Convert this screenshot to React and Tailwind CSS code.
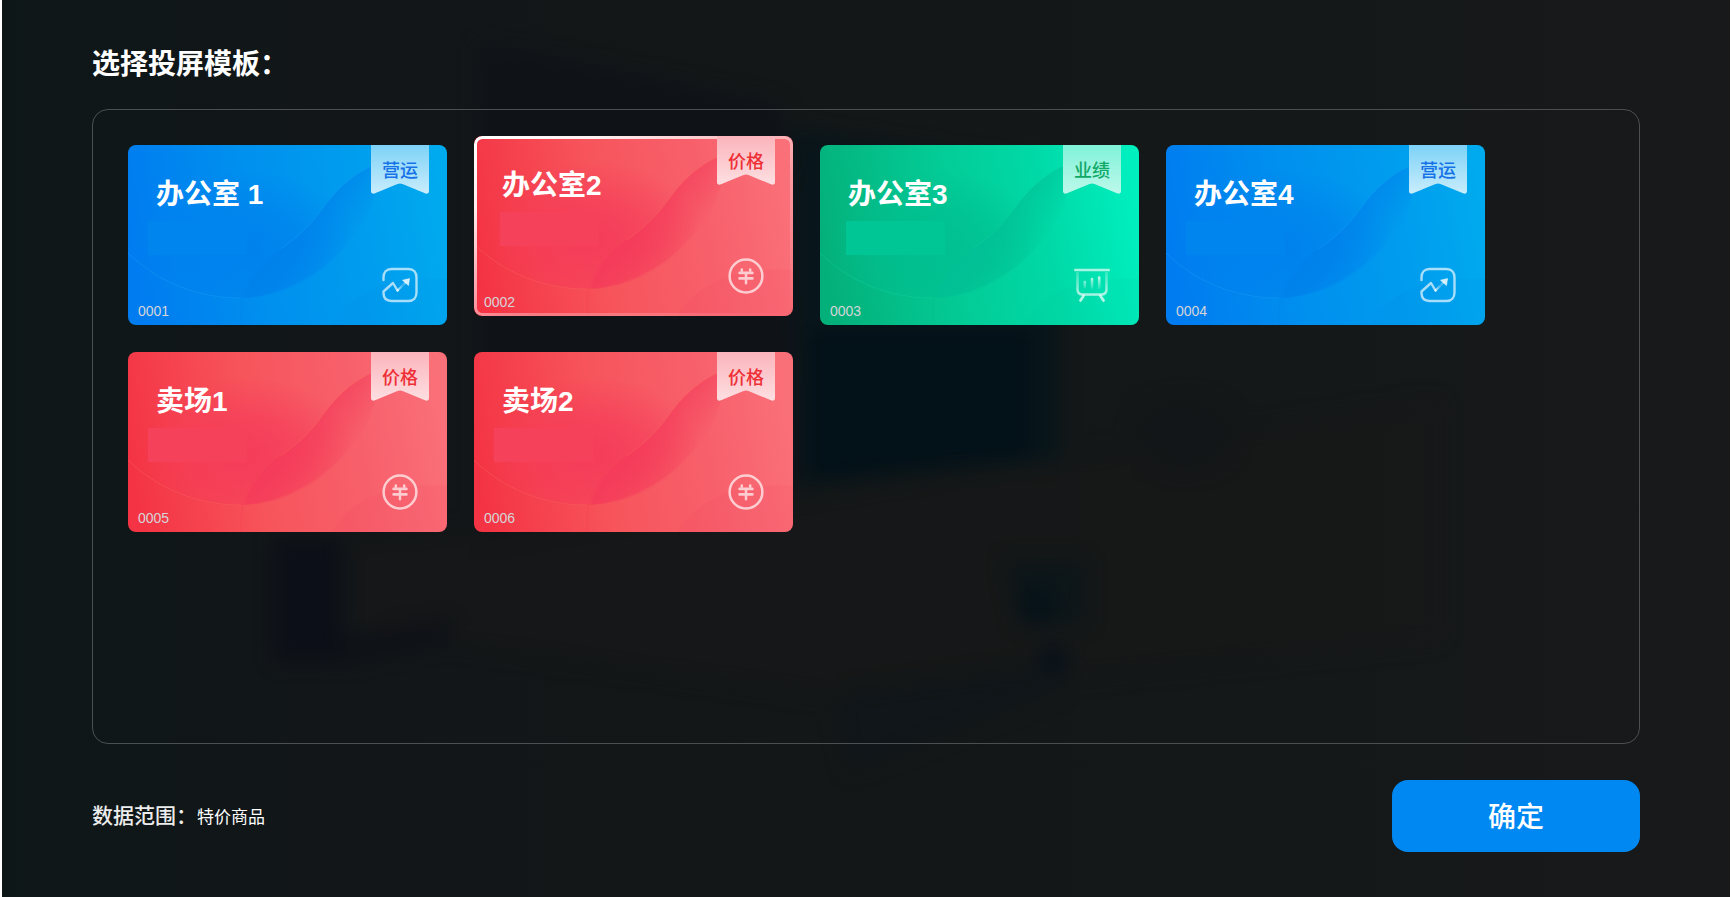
import { useState } from "react";

const THEMES = {
  blue: {
    tag: "营运",
    tagText: "text-[#1672e6]",
    patch: "bg-[#0084ed]",
    base: ["#007cf0", "#0090ee", "#009cee", "#00aaee"],
    disc: "#007fed",
    fold: "#0080ea",
    edge: "#1aa4f5",
    ribbon: ["#7dd2f7", "#c9edfc"],
    Icon: TrendIcon,
  },
  red: {
    tag: "价格",
    tagText: "text-[#ee2f36]",
    patch: "bg-[#f6415a]",
    base: ["#f43444", "#f7555c", "#f7606b", "#fa7079"],
    disc: "#f5385a",
    fold: "#f4395a",
    edge: "#f9695c",
    ribbon: ["#fbb4bb", "#fddfe2"],
    Icon: YuanIcon,
  },
  green: {
    tag: "业绩",
    tagText: "text-[#10a866]",
    patch: "bg-[#00c594]",
    base: ["#04b07a", "#03cb96", "#00daa8", "#00efbf"],
    disc: "#00bd90",
    fold: "#00bf96",
    edge: "#14d49f",
    ribbon: ["#7ff2d8", "#bdf8ea"],
    Icon: BoardIcon,
  },
};

const TEMPLATES = [
  { code: "0001", name: "办公室 1", theme: "blue", inset: true },
  { code: "0002", name: "办公室2", theme: "red", inset: false },
  { code: "0003", name: "办公室3", theme: "green", inset: false },
  { code: "0004", name: "办公室4", theme: "blue", inset: true },
  { code: "0005", name: "卖场1", theme: "red", inset: true },
  { code: "0006", name: "卖场2", theme: "red", inset: true },
];

function TrendIcon() {
  return (
    <svg viewBox="0 0 36 36" className="size-9" fill="none" aria-hidden="true">
      <defs>
        <linearGradient id="trend-fade" x1="15" y1="24" x2="26" y2="12" gradientUnits="userSpaceOnUse">
          <stop offset="0" stopColor="#fff" stopOpacity="0.75" />
          <stop offset="0.5" stopColor="#fff" stopOpacity="0.2" />
          <stop offset="1" stopColor="#fff" stopOpacity="0.6" />
        </linearGradient>
      </defs>
      <path
        d="M1.5 13V10.5C1.5 5.5 4.5 2 9.5 2H26.5C31.5 2 34.5 5.5 34.5 10.5V25.5C34.5 30.5 31.5 34 26.5 34H9.5C4.5 34 1.5 31 1.5 26V24.5L11 16L15.5 23.5"
        stroke="#fff"
        strokeOpacity="0.66"
        strokeWidth="2.4"
        strokeLinecap="round"
        strokeLinejoin="round"
      />
      <path d="M15.5 23.5L24 15" stroke="url(#trend-fade)" strokeWidth="2.4" strokeLinecap="round" />
      <path d="M20.5 13.2L27.5 11.6L26.5 18.5Z" fill="#fff" fillOpacity="0.8" stroke="#fff" strokeOpacity="0.5" strokeLinejoin="round" />
    </svg>
  );
}

function YuanIcon() {
  return (
    <svg viewBox="0 0 36 36" className="size-9" fill="none" stroke="#fff" strokeLinecap="round" aria-hidden="true">
      <g opacity="0.68">
        <circle cx="18" cy="18" r="16.4" strokeWidth="2.5" />
        <path d="M11.6 14.9H24.4M11.6 20.4H24.4" strokeWidth="2.7" />
        <path d="M18 15V25.2M13.8 11.4V12.8M22.2 11.4V12.8" strokeWidth="2.5" />
      </g>
    </svg>
  );
}

function BoardIcon() {
  return (
    <svg viewBox="0 0 36 36" className="size-9" fill="none" aria-hidden="true">
      <defs>
        <linearGradient id="board-frame" x1="0" y1="4" x2="0" y2="30" gradientUnits="userSpaceOnUse">
          <stop offset="0" stopColor="#fff" stopOpacity="0.2" />
          <stop offset="1" stopColor="#fff" stopOpacity="0.7" />
        </linearGradient>
        <linearGradient id="board-bars" x1="0" y1="10" x2="0" y2="22" gradientUnits="userSpaceOnUse">
          <stop offset="0" stopColor="#fff" stopOpacity="0.75" />
          <stop offset="1" stopColor="#fff" stopOpacity="0.1" />
        </linearGradient>
      </defs>
      <path d="M1.5 3H34.5" stroke="#fff" strokeOpacity="0.65" strokeWidth="2.6" strokeLinecap="square" />
      <path d="M3.5 5V22.5C3.5 26 5.5 27.5 9 27.5H27C30.5 27.5 32.5 26 32.5 22.5V5" stroke="url(#board-frame)" strokeWidth="2.6" />
      <path d="M9.5 29L6.5 33.5M26.5 29L29.5 33.5" stroke="#fff" strokeOpacity="0.7" strokeWidth="2.8" strokeLinecap="round" />
      <path d="M10.8 15V20M18 12V21M25.2 10.5V21" stroke="url(#board-bars)" strokeWidth="2.6" strokeLinecap="round" />
    </svg>
  );
}

function CardArt({ id, theme }) {
  const [a, b, c, d] = theme.base;
  return (
    <svg viewBox="0 0 320 180" preserveAspectRatio="none" className="absolute inset-0 size-full" aria-hidden="true">
      <defs>
        <linearGradient id={`${id}-base`} x1="0" y1="0.5" x2="1" y2="0.4">
          <stop offset="0" stopColor={a} />
          <stop offset="0.4" stopColor={b} />
          <stop offset="0.72" stopColor={c} />
          <stop offset="1" stopColor={d} />
        </linearGradient>
        <radialGradient id={`${id}-disc`} cx="120" cy="105" r="110" gradientUnits="userSpaceOnUse" gradientTransform="translate(0 28) scale(1 0.72)">
          <stop offset="0" stopColor={theme.disc} stopOpacity="0.85" />
          <stop offset="0.5" stopColor={theme.disc} stopOpacity="0.55" />
          <stop offset="1" stopColor={theme.disc} stopOpacity="0" />
        </radialGradient>
        <linearGradient id={`${id}-fold`} x1="168" y1="78" x2="212" y2="114" gradientUnits="userSpaceOnUse">
          <stop offset="0" stopColor={theme.fold} stopOpacity="0.75" />
          <stop offset="1" stopColor={theme.fold} stopOpacity="0" />
        </linearGradient>
      </defs>
      <rect width="320" height="180" fill={`url(#${id}-base)`} />
      <circle cx="105" cy="5" r="148" fill={`url(#${id}-disc)`} />
      <path
        d="M242 22C222 32 208 46 197 61C181 83 170 92 153 104C135 118 121 133 117 153C185 150 248 96 252 22Z"
        fill={`url(#${id}-fold)`}
      />
      <path d="M0 108C30 137 70 153 112 153" fill="none" stroke={theme.edge} strokeOpacity="0.4" />
      <path d="M242 22C222 32 208 46 197 61C181 83 170 92 153 104" fill="none" stroke={theme.edge} strokeOpacity="0.4" />
      <path d="M153 104C125 124 111 140 114 180" fill="none" stroke={theme.fold} strokeOpacity="0.3" />
      <path d="M204 180C220 152 256 130 320 134V180Z" fill={theme.fold} fillOpacity="0.08" />
    </svg>
  );
}

function Ribbon({ id, theme }) {
  return (
    <span className={`absolute top-0 right-[18px] flex h-[49px] w-[58px] justify-center pt-3 text-lg font-medium ${theme.tagText}`}>
      <svg viewBox="0 0 58 49" className="absolute inset-0 size-full" aria-hidden="true">
        <defs>
          <linearGradient id={`${id}-ribbon`} x1="0" y1="0" x2="0" y2="1">
            <stop offset="0" stopColor={theme.ribbon[0]} />
            <stop offset="1" stopColor={theme.ribbon[1]} />
          </linearGradient>
        </defs>
        <path d="M0 0H58V46C58 48.5 56 49.3 54 48.3L31.5 39Q29 38 26.5 39L4 48.3C2 49.3 0 48.5 0 46Z" fill={`url(#${id}-ribbon)`} />
      </svg>
      <span className="relative leading-7">{theme.tag}</span>
    </span>
  );
}

function TemplateCard({ item, selected, onSelect }) {
  const theme = THEMES[item.theme];
  const id = `card-${item.code}`;
  return (
    <button
      type="button"
      aria-pressed={selected}
      onClick={onSelect}
      className={`relative flex h-[180px] w-[319px] flex-col overflow-hidden rounded-lg text-left text-white ${selected ? "-translate-y-[9px]" : ""}`}
    >
      <CardArt id={id} theme={theme} />
      {selected && (
        <svg className="absolute inset-0 size-full" viewBox="0 0 320 180" preserveAspectRatio="none" aria-hidden="true">
          <defs>
            <linearGradient id="selected-edge" x1="0" y1="0" x2="1" y2="1">
              <stop offset="0" stopColor="#fff" />
              <stop offset="0.2" stopColor="#fff" stopOpacity="0.9" />
              <stop offset="0.6" stopColor="#fff" stopOpacity="0.3" />
              <stop offset="1" stopColor="#fff" stopOpacity="0" />
            </linearGradient>
          </defs>
          <rect x="1.5" y="1.5" width="317" height="177" rx="7" fill="none" stroke="url(#selected-edge)" strokeWidth="3" />
        </svg>
      )}
      <Ribbon id={id} theme={theme} />
      <span className="relative mt-[30px] ml-7 text-[28px] leading-10 font-bold">{item.name}</span>
      <span className={`relative mt-1.5 h-[34px] w-[99px] ${theme.patch} ${item.inset ? "ml-5" : "ml-[26px]"}`} />
      <span className="relative mt-auto mb-1 ml-2.5 text-sm text-[#d5d5d8]">{item.code}</span>
      <span className="absolute right-[29px] bottom-[22px]">
        <theme.Icon />
      </span>
    </button>
  );
}

function Backdrop() {
  return (
    <svg viewBox="0 0 1732 897" preserveAspectRatio="xMidYMid slice" className="absolute inset-0 size-full" aria-hidden="true">
      <defs>
        <linearGradient id="room" x1="0" y1="0" x2="1" y2="0">
          <stop offset="0" stopColor="#0e1718" />
          <stop offset="0.2" stopColor="#121618" />
          <stop offset="0.7" stopColor="#141818" />
          <stop offset="1" stopColor="#18191b" />
        </linearGradient>
        <filter id="soft" x="-20%" y="-20%" width="140%" height="140%" colorInterpolationFilters="sRGB">
          <feGaussianBlur stdDeviation="10" />
        </filter>
      </defs>
      <rect width="1732" height="897" fill="url(#room)" />
      <g filter="url(#soft)">
        <path d="M480 45L780 105L830 480L480 540Z" fill="#0f1318" />
        <path d="M790 130L1060 170V460L800 485Z" fill="#08151a" />
        <path d="M810 330H1030V455L810 480Z" fill="#031118" />
        <path d="M350 540L800 500L1060 460L1440 400V640L860 700L350 630Z" fill="#181817" fillOpacity="0.5" />
        <path d="M275 540H340V660H275Z" fill="#0c0f18" />
        <path d="M340 640L450 620V640L340 662Z" fill="#0e1117" />
        <path d="M1005 560H1085V625H1020Z" fill="#0d1619" />
        <ellipse cx="1037" cy="605" rx="16" ry="20" fill="#051219" />
        <ellipse cx="1053" cy="664" rx="15" ry="18" fill="#06101a" />
        <path d="M835 695L1060 665V690L850 770Z" fill="#101619" />
        <ellipse cx="1185" cy="435" rx="50" ry="36" fill="#131618" />
      </g>
    </svg>
  );
}

export default function App() {
  const [selected, setSelected] = useState("0002");
  return (
    <main className="relative flex min-h-screen flex-col border-x-2 border-white bg-[#131719] px-[90px] pt-11 pb-[45px] font-['Liberation_Sans','Noto_Sans_CJK_SC',sans-serif] text-white">
      <Backdrop />
      <h1 className="relative text-[28px] leading-[42px] font-bold">选择投屏模板：</h1>
      <section className="relative mt-[23px] flex flex-1 flex-wrap content-start gap-[27px] rounded-2xl border border-[#4c4f51] px-[35px] py-[35px]">
        {TEMPLATES.map((item) => (
          <TemplateCard
            key={item.code}
            item={item}
            selected={item.code === selected}
            onSelect={() => setSelected(item.code)}
          />
        ))}
      </section>
      <footer className="relative mt-9 flex items-center justify-between">
        <p className="flex items-baseline">
          <span className="text-[21px] font-medium text-[#ececec]">数据范围：</span>
          <span className="text-[17px]">特价商品</span>
        </p>
        <button type="button" className="h-[72px] w-[248px] rounded-2xl bg-[#0088f2] pt-1 text-[28px] font-medium">
          确定
        </button>
      </footer>
    </main>
  );
}
